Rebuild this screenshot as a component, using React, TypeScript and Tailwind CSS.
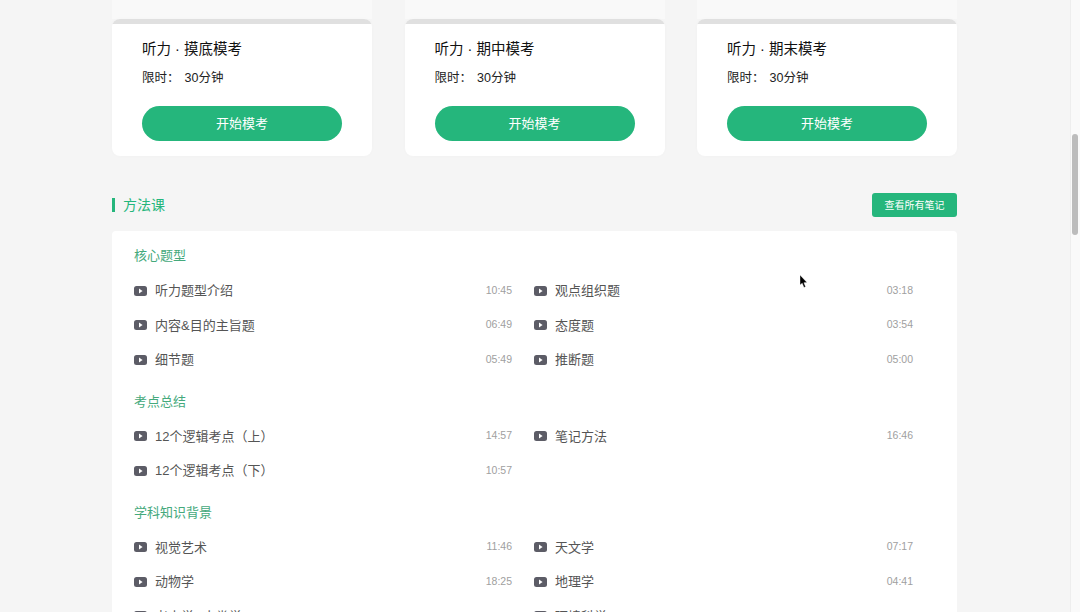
import React from 'react';

type Lesson = { title: string; time?: string };
type Section = { name: string; lessons: Lesson[] };

const exams = ['听力 · 摸底模考', '听力 · 期中模考', '听力 · 期末模考'];

const sections: Section[] = [
  {
    name: '核心题型',
    lessons: [
      { title: '听力题型介绍', time: '10:45' },
      { title: '观点组织题', time: '03:18' },
      { title: '内容&目的主旨题', time: '06:49' },
      { title: '态度题', time: '03:54' },
      { title: '细节题', time: '05:49' },
      { title: '推断题', time: '05:00' },
    ],
  },
  {
    name: '考点总结',
    lessons: [
      { title: '12个逻辑考点（上）', time: '14:57' },
      { title: '笔记方法', time: '16:46' },
      { title: '12个逻辑考点（下）', time: '10:57' },
    ],
  },
  {
    name: '学科知识背景',
    lessons: [
      { title: '视觉艺术', time: '11:46' },
      { title: '天文学', time: '07:17' },
      { title: '动物学', time: '18:25' },
      { title: '地理学', time: '04:41' },
      { title: '考古学&人类学' },
      { title: '环境科学' },
    ],
  },
];

const PlayIcon = () => (
  <svg width="13" height="10" viewBox="0 0 13 10" className="shrink-0">
    <rect width="13" height="10" rx="2.5" fill="#5c5c66" />
    <path d="M5 2.6 L8.6 5 L5 7.4 Z" fill="#ffffff" />
  </svg>
);

const ExamCard = ({ title }: { title: string }) => (
  <div className="w-[260px] h-[137px] bg-white rounded-lg overflow-hidden shadow-[0_0_4px_rgba(0,0,0,0.02)]">
    <div className="h-[5px] bg-[#e0e0e0]" />
    <div className="px-[30px]">
      <div className="mt-[15px] h-[20px] leading-[20px] text-[14.5px] text-[#111]">{title}</div>
      <div className="mt-[9px] h-[20px] leading-[20px] text-[12.5px] text-[#222]">
        限时：<span className="ml-[5px]">30分钟</span>
      </div>
      <button className="mt-[18px] w-[200px] h-[35px] rounded-full bg-[#25b67c] text-white text-[13px]">开始模考</button>
    </div>
  </div>
);

const LessonRow = ({ lesson }: { lesson: Lesson }) => (
  <div className="h-[34.5px] flex items-center">
    <PlayIcon />
    <span className="ml-[8px] text-[13px] text-[#555]">{lesson.title}</span>
    {lesson.time && <span className="ml-auto text-[10.5px] text-[#a0a0a0]">{lesson.time}</span>}
  </div>
);

export default function App() {
  return (
    <div className="relative h-[612px] w-[1080px] overflow-hidden flex bg-[#f5f5f5] font-['Liberation_Sans','Noto_Sans_CJK_SC',sans-serif]">
      <main className="w-[1070px] pl-[112px]">
        <div className="w-[845px]">
          {/* tail of the previous row of cards */}
          <div className="h-[19px] flex justify-between">
            <div className="w-[260px] bg-[#f9f9f9]" />
            <div className="w-[260px] bg-[#f9f9f9]" />
            <div className="w-[260px] bg-[#f9f9f9]" />
          </div>
          <div className="flex justify-between">
            {exams.map((t) => (
              <ExamCard key={t} title={t} />
            ))}
          </div>

          <div className="mt-[37px] h-[24px] flex items-center justify-between">
            <div className="flex items-center">
              <span className="w-[3px] h-[14px] bg-[#25b67c]" />
              <span className="ml-[8px] text-[14px] text-[#25b67c]">方法课</span>
            </div>
            <button className="w-[85px] h-[24px] rounded-[3px] bg-[#25b67c] text-white text-[10px]">查看所有笔记</button>
          </div>

          <div className="mt-[14px] bg-white rounded-t pl-[22px] pr-[44px] pt-[8px] flex flex-col gap-[7.5px]">
            {sections.map((s) => (
              <section key={s.name}>
                <h3 className="h-[34.5px] leading-[34.5px] text-[13px] text-[#45a97c]">{s.name}</h3>
                <div className="grid grid-cols-[378px_379px] gap-x-[22px]">
                  {s.lessons.map((l) => (
                    <LessonRow key={l.title} lesson={l} />
                  ))}
                </div>
              </section>
            ))}
          </div>
        </div>
      </main>

      <div className="w-[10px] bg-[#fafafa] border-l border-[#eeeeee] pl-[1px] pt-[134px]">
        <div className="w-[6px] h-[101px] rounded-full bg-[#bcbcbc]" />
      </div>

      {/* mouse pointer */}
      <svg width="9" height="14" viewBox="0 0 9 14" className="absolute left-[799px] top-[275px]">
        <path d="M1 0 L1 10 L3.2 8.2 L5 12.5 L6.6 11.8 L4.9 7.7 L8 7.5 Z" fill="#000000" stroke="#ffffff" strokeWidth="0.4" />
      </svg>
    </div>
  );
}
